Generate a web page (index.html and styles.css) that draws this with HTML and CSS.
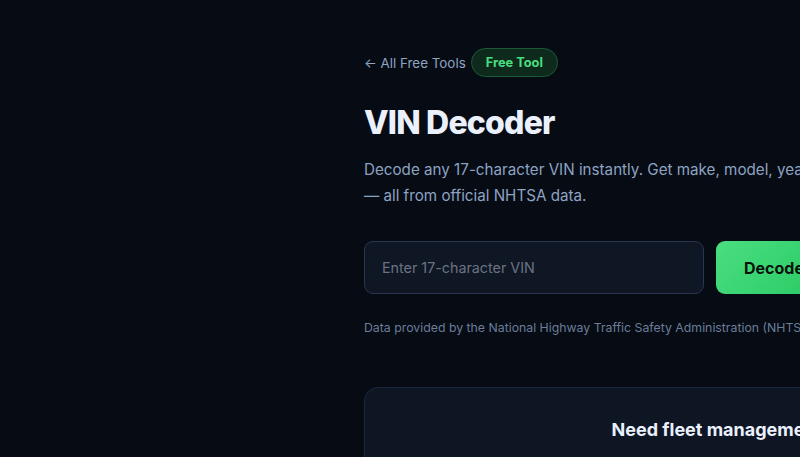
FILE: index.html
```html
<!DOCTYPE html>
<html lang="en">
<head>
<meta charset="utf-8">
<title>VIN Decoder</title>
<link rel="stylesheet" href="styles.css">
</head>
<body>
<div class="page">
  <main class="container">
    <div class="crumbs">
      <a class="back" href="#">← All Free Tools</a>
      <span class="badge">Free Tool</span>
    </div>
    <h1 class="title">VIN Decoder</h1>
    <p class="lead">Decode any 17-character VIN instantly. Get make, model, year, engine, and safety info<br>— all from official NHTSA data.</p>
    <form class="search">
      <input class="vin-input" type="text" placeholder="Enter 17-character VIN">
      <button class="decode-btn" type="button">Decode VIN</button>
    </form>
    <p class="note">Data provided by the National Highway Traffic Safety Administration (NHTSA) vPIC API.</p>
    <section class="cta">
      <h2 class="cta-title">Need fleet management software?</h2>
    </section>
  </main>
</div>
</body>
</html>
```

FILE: styles.css
```css
* { box-sizing: border-box; }
html, body { margin: 0; padding: 0; }
body {
  background: #060b14;
  font-family: Inter, "Noto Sans", "Liberation Sans", sans-serif;
  color: #e5edf9;
  overflow: hidden;
}
.page {
  width: 800px;
  height: 457px;
  overflow: hidden;
  padding: 48px 0 0 364px;
}
.container {
  width: 798px;
}
.crumbs {
  display: flex;
  align-items: center;
  gap: 5px;
  height: 29px;
}
.back {
  color: #8ea3c2;
  font-size: 13.4px;
  text-decoration: none;
}
.badge {
  display: inline-flex;
  align-items: center;
  height: 29px;
  padding: 0 14px;
  border: 1px solid #1d5a36;
  background: #0e2a1d;
  color: #4ade80;
  border-radius: 999px;
  font-size: 12.8px;
  font-weight: 700;
}
.title {
  margin: 26px 0 0;
  font-size: 32px;
  font-weight: 800;
  letter-spacing: -0.025em;
  line-height: 40px;
  color: #eaf1fd;
}
.lead {
  margin: 14px 0 0;
  font-size: 15.2px;
  line-height: 26px;
  color: #8ea3c2;
  white-space: nowrap;
}
.search {
  display: flex;
  gap: 12px;
  margin-top: 32px;
}
.vin-input {
  width: 340px;
  height: 53px;
  border: 1.5px solid #2a3650;
  border-radius: 9px;
  background: #0f1624;
  padding: 0 17px;
  font-family: inherit;
  font-size: 14.3px;
  color: #e5edf9;
  outline: none;
}
.vin-input::placeholder { color: #6b7383; }
.decode-btn {
  height: 53px;
  padding: 0 28px;
  border: none;
  border-radius: 9px;
  background: linear-gradient(135deg, #4ade80, #22c55e);
  color: #06120b;
  font-family: inherit;
  font-size: 16px;
  font-weight: 700;
}
.note {
  margin: 26px 0 0;
  font-size: 12.3px;
  color: #6a7d99;
  white-space: nowrap;
}
.cta {
  margin-top: 52px;
  height: 160px;
  border: 1px solid #1c2740;
  border-radius: 14px;
  background: #0f1623;
  padding-top: 31px;
  text-align: center;
}
.cta-title {
  margin: 0;
  font-size: 18px;
  font-weight: 700;
  color: #eaf1fd;
}
```
